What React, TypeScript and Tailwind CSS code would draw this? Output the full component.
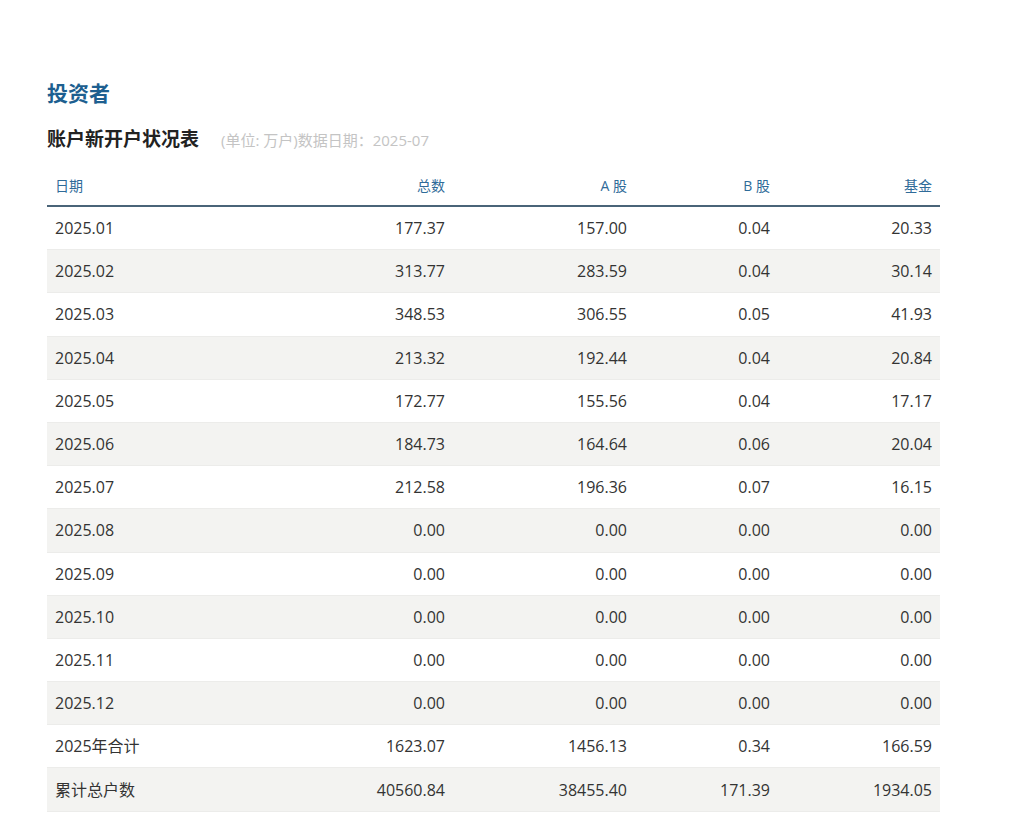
const rows: string[][] = [
  ["2025.01","177.37","157.00","0.04","20.33"],
  ["2025.02","313.77","283.59","0.04","30.14"],
  ["2025.03","348.53","306.55","0.05","41.93"],
  ["2025.04","213.32","192.44","0.04","20.84"],
  ["2025.05","172.77","155.56","0.04","17.17"],
  ["2025.06","184.73","164.64","0.06","20.04"],
  ["2025.07","212.58","196.36","0.07","16.15"],
  ["2025.08","0.00","0.00","0.00","0.00"],
  ["2025.09","0.00","0.00","0.00","0.00"],
  ["2025.10","0.00","0.00","0.00","0.00"],
  ["2025.11","0.00","0.00","0.00","0.00"],
  ["2025.12","0.00","0.00","0.00","0.00"],
  ["2025年合计","1623.07","1456.13","0.34","166.59"],
  ["累计总户数","40560.84","38455.40","171.39","1934.05"],
];
const grid = "grid grid-cols-[200px_206px_182px_143px_162px]";
export default function App() {
  return (
    <div className="w-[1034px] h-[817px] bg-white overflow-hidden pl-[47px] pt-[78px]" style={{fontFamily:'"Open Sans","Noto Sans CJK SC",sans-serif'}}>
      <div className="text-[21px] font-bold text-[#1d5f90] leading-[30px]">投资者</div>
      <div className="flex items-baseline mt-[16px] leading-[30px]">
        <span className="text-[19px] font-bold text-[#222]">账户新开户状况表</span>
        <span className="ml-[22px] text-[15px] text-[#c4c4c4]">(单位: 万户)数据日期：2025-07</span>
      </div>
      <div className="w-[893px] mt-[20px]">
        <div className={`${grid} h-[32px] items-start text-[14px] text-[#2f6b99] border-b-2 border-[#4a6478]`}>
          <div className="pl-2">日期</div>
          <div className="text-right pr-2">总数</div>
          <div className="text-right pr-2">A 股</div>
          <div className="text-right pr-2">B 股</div>
          <div className="text-right pr-2">基金</div>
        </div>
        {rows.map((r, i) => (
          <div key={i} className={`${grid} h-[43.2px] items-center text-[16px] text-[#333] border-b border-[#ececea] ${i % 2 ? "bg-[#f3f3f1]" : "bg-white"}`}>
            <div className="pl-2">{r[0]}</div>
            {r.slice(1).map((c, j) => <div key={j} className="text-right pr-2">{c}</div>)}
          </div>
        ))}
      </div>
    </div>
  );
}
